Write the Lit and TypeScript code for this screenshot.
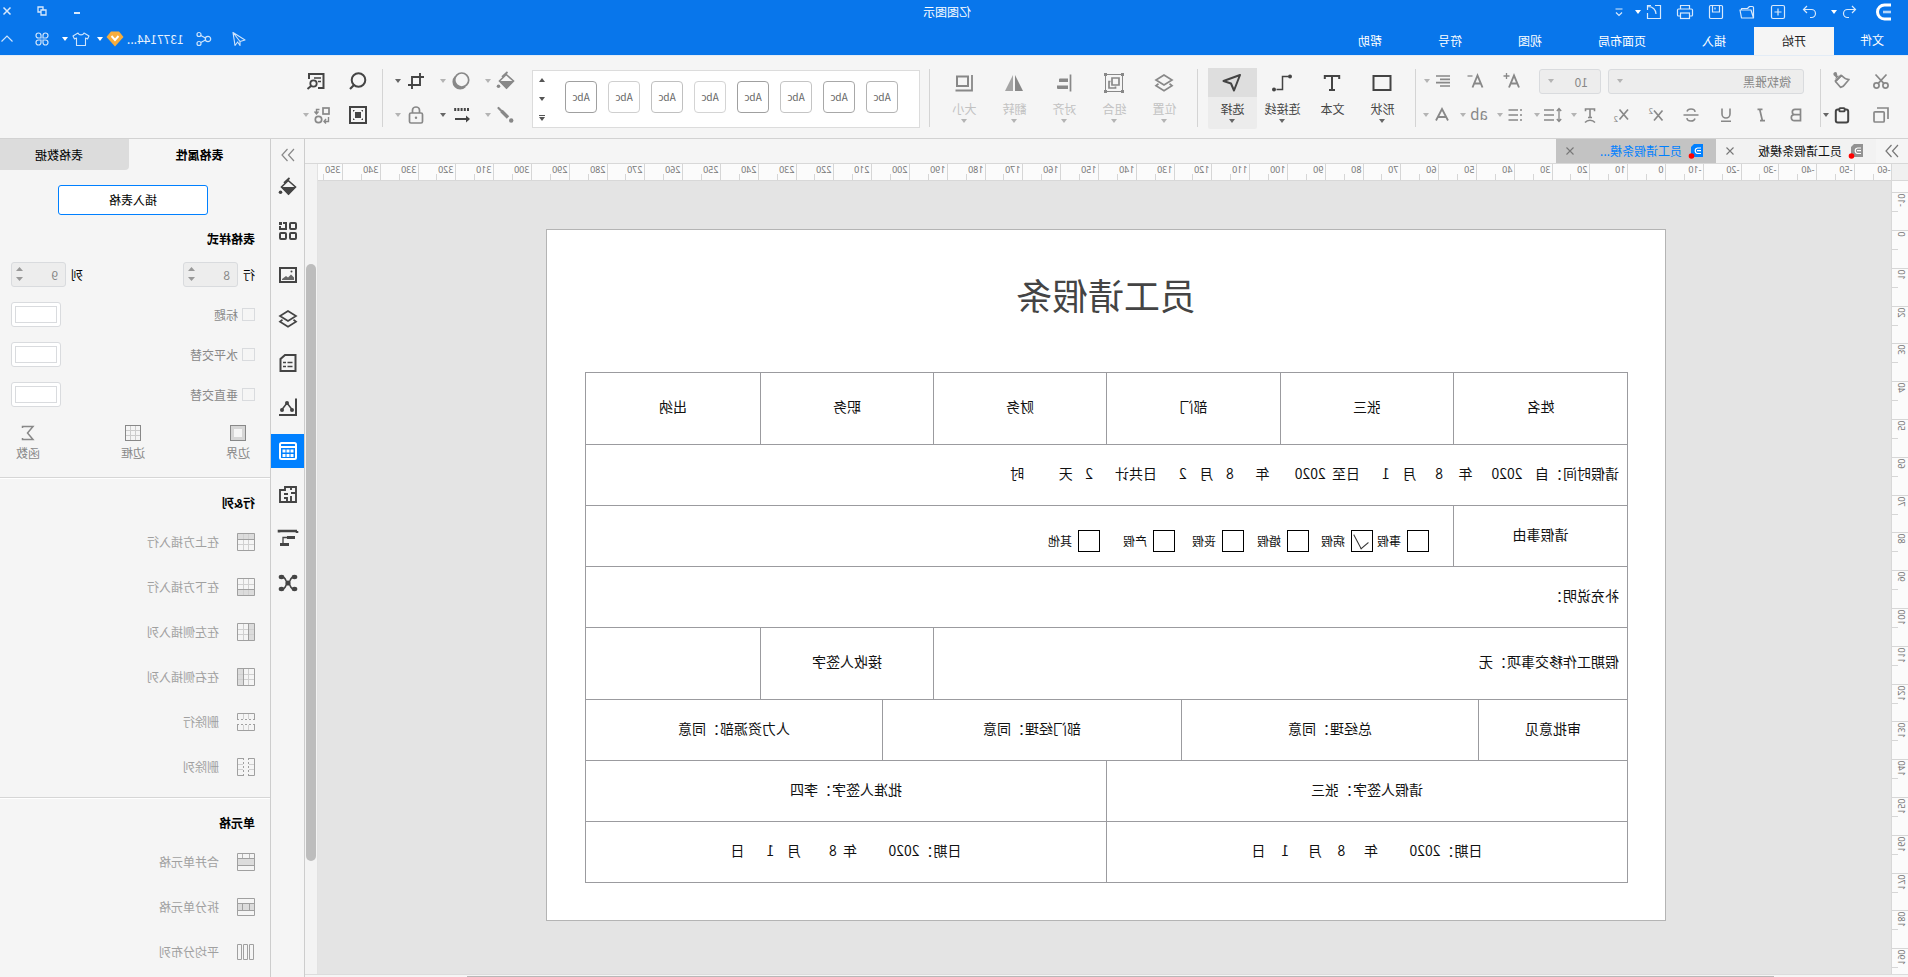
import { LitElement, html, svg, css, TemplateResult } from "lit";
import { customElement, property, state } from "lit/decorators.js";
import { classMap } from "lit/directives/class-map.js";

type Glyph = ReturnType<typeof svg>;

/* 20x20 toolbar glyphs, drawn with currentColor */
const glyphs: Record<string, Glyph> = {
  cut: svg`<g fill="none" stroke="currentColor" stroke-width="1.7"><circle cx="5.5" cy="14.5" r="2.6"/><circle cx="14.5" cy="14.5" r="2.6"/><path d="M4.5 3.5 13 12.6M15.5 3.5 7 12.6"/></g>`,
  format: svg`<path d="M15.3 1.6a2 2 0 0 1 3 2.6l-2.2 2 .6 2.4-4.2-4 2 .3z" fill="currentColor"/><path d="M10.5 4.5l6 6-5 5.800c-2-.4-3.700-1.600-4.700-3.300L3 8.500c2.600 0 5-1.300 7.500-4z" fill="none" stroke="currentColor" stroke-width="1.700" stroke-linejoin="round"/><path d="M9.500 4.500l7 7 1-2-6-6z" fill="currentColor"/>`,
  copy: svg`<g fill="none" stroke="currentColor" stroke-width="1.700"><rect x="6.800" y="6.800" width="10.200" height="10.200" rx="1"/><path d="M3 14V3H14"/></g>`,
  paste: svg`<g fill="none" stroke="currentColor" stroke-width="2"><rect x="3.800" y="4.500" width="12.400" height="13" rx="2"/></g><rect x="6.500" y="2.200" width="7" height="5" rx="1.500" fill="currentColor"/><rect x="8.300" y="4" width="3.400" height="1.500" fill="#f5f5f5"/>`,
  grow: svg`<path d="M3 16.500 8 4.500l5 12M4.800 12.500h6.400" fill="none" stroke="currentColor" stroke-width="1.900"/><path d="M12.500 5h6M15.500 2v6" stroke="currentColor" stroke-width="1.300"/>`,
  shrink: svg`<path d="M2.500 16.500 7.500 4.500l5 12M4.300 12.500h6.400" fill="none" stroke="currentColor" stroke-width="1.900"/><path d="M12.500 5h5" stroke="currentColor" stroke-width="1.300"/>`,
  align: svg`<path d="M3 5h14M3 8.300h10M3 11.600h14M3 15h10" stroke="currentColor" stroke-width="1.700"/>`,
  bold: svg`<path d="M5.500 4.300h5.500a2.700 2.700 0 0 1 0 5.400H5.500zM5.500 9.700h6.200a3 3 0 0 1 0 6H5.500z" fill="none" stroke="currentColor" stroke-width="1.700"/>`,
  italic: svg`<path d="M8.500 4.300h5M6 15.700h5M11.300 4.300 8.600 15.700" fill="none" stroke="currentColor" stroke-width="1.700"/>`,
  underline: svg`<path d="M6 3.500V9a4 4 0 0 0 8 0V3.500M5 16.300h10" fill="none" stroke="currentColor" stroke-width="1.600"/>`,
  strike: svg`<path d="M14 6.500C13.600 4.800 12 4 10 4 7.700 4 6 5.100 6 7M6 13.500c.4 1.700 2 2.500 4 2.500 2.300 0 4-1.100 4-3M2.500 10h15" fill="none" stroke="currentColor" stroke-width="1.500"/>`,
  sup: svg`<path d="M3.500 5.500l8.500 10M12 5.500l-8.500 10" stroke="currentColor" stroke-width="1.700"/><text x="13" y="9" font-size="8" fill="currentColor">2</text>`,
  sub: svg`<path d="M3 4.500l8.500 10M11.500 4.500 3 14.500" stroke="currentColor" stroke-width="1.700"/><text x="13" y="17" font-size="8" fill="currentColor">2</text>`,
  textShape: svg`<path d="M5.500 6.200V4h9v2.200M10 4v8.500M8 12.500h4" fill="none" stroke="currentColor" stroke-width="1.600"/><path d="M5 17.500a6.500 6.500 0 0 1 10 0" fill="none" stroke="currentColor" stroke-width="1.500"/>`,
  spacing: svg`<path d="M4 3.500v13M1.800 6 4 3.500 6.200 6M1.800 14 4 16.500 6.200 14" fill="none" stroke="currentColor" stroke-width="1.300"/><path d="M9 5h10M9 10h10M9 15h10" stroke="currentColor" stroke-width="1.700"/>`,
  list: svg`<path d="M8 5h9.500M8 10h9.500M8 15h9.500" stroke="currentColor" stroke-width="1.700"/><path d="M4 5h2M4 10h2M4 15h2" stroke="currentColor" stroke-width="1.700"/>`,
  highlight: svg`<text x="1" y="15" font-size="15" fill="currentColor">ab</text>`,
  fontColor: svg`<path d="M4 15.500 10 4l6 11.500M6 12h8" fill="none" stroke="currentColor" stroke-width="1.800"/>`,
  rect: svg`<rect x="1.500" y="3" width="17" height="14" fill="none" stroke="currentColor" stroke-width="2"/>`,
  text: svg`<path d="M2.800 6V3h14.400v3M10 3v14M7 17h6" fill="none" stroke="currentColor" stroke-width="2"/>`,
  connector: svg`<path d="M3.500 3.500h6v13h6" fill="none" stroke="currentColor" stroke-width="1.500"/><circle cx="2" cy="3.500" r="2" fill="currentColor"/><circle cx="18" cy="16.500" r="2" fill="currentColor"/>`,
  pointer: svg`<path d="M2 3 18.500 9 11 11.500 8 18.500z" fill="none" stroke="currentColor" stroke-width="2" stroke-linejoin="round" transform="translate(0 -1)"/>`,
  layers: svg`<g fill="none" stroke="currentColor" stroke-width="1.700"><path d="M10 2 18 7l-8 5-8-5z"/><path d="M4.500 10.800 2 12.600 10 17.800l8-5.200-2.500-1.800"/></g>`,
  group: svg`<g fill="none" stroke="currentColor"><rect x="1.500" y="1.500" width="17" height="17"/><path d="M5 5h7v7H5z M13.500 8.500H15V15H8.500v-1.500" stroke-width="1.700"/></g><path d="M0 0h3v3H0zM17 0h3v3h-3zM0 17h3v3H0zM17 17h3v3h-3z" fill="currentColor"/>`,
  alignObjects: svg`<path d="M3.500 1.500v17" stroke="currentColor" stroke-width="1.700"/><path d="M6 5.500h8a1 1 0 0 1 1 1V9H6zM6 12.500h11V15a1 1 0 0 1-1 1H6z" fill="currentColor"/>`,
  flip: svg`<path d="M9 2v16H1z" fill="currentColor"/><path d="M11 2v16h8z" fill="currentColor" opacity=".75"/>`,
  size: svg`<path d="M6 3.500h11v9.500h-11z" fill="none" stroke="currentColor" stroke-width="2"/><path d="M2 2v15.500h16.500" fill="none" stroke="currentColor" stroke-width="1.800"/>`,
  bucket: svg`<path d="M8.500 1l5.500 5" fill="none" stroke="currentColor" stroke-width="1.700"/><path d="M9.800 3.500 2.500 10l7 7 7-7z" fill="none" stroke="currentColor" stroke-width="1.600"/><path d="M2.500 10h14l-7 8z" fill="currentColor"/><circle cx="17.500" cy="15.200" r="1.800" fill="currentColor"/>`,
  pen: svg`<path d="M17.500 3 13 7.500" stroke="currentColor" stroke-width="2.200" stroke-linecap="round"/><path d="M14.500 6 8 12.500" stroke="currentColor" stroke-width="3.400"/><circle cx="4.800" cy="15.500" r="2.200" fill="currentColor"/>`,
  shadow: svg`<path d="M15.500 4.500a7.600 7.600 0 1 1-11 11z" fill="currentColor" transform="translate(.8 .8)"/><circle cx="9.300" cy="9" r="7" fill="#f5f5f5" stroke="currentColor" stroke-width="1.700"/>`,
  dashes: svg`<path d="M2 4.500h15" stroke="currentColor" stroke-width="3" stroke-dasharray="2 1.200"/><path d="M2 14h14" stroke="currentColor" stroke-width="2"/><path d="M5 10.500 1 14l4 3.500z" fill="currentColor"/>`,
  crop: svg`<path d="M6 2v12h12M2 6h12v12" fill="none" stroke="currentColor" stroke-width="1.900"/>`,
  lock: svg`<rect x="3.500" y="8" width="13" height="10" rx="1.500" fill="none" stroke="currentColor" stroke-width="1.700"/><path d="M6.500 8V5a3.500 3 0 0 1 7 0v3" fill="none" stroke="currentColor" stroke-width="1.700"/><circle cx="10" cy="12.800" r="1.200" fill="currentColor"/>`,
  search: svg`<circle cx="9.500" cy="9" r="6.800" fill="none" stroke="currentColor" stroke-width="2"/><path d="M13.500 13.500 18 18" stroke="currentColor" stroke-width="2.200"/>`,
  findDoc: svg`<path d="M8 17H2.500V3H17v5" fill="none" stroke="currentColor" stroke-width="2"/><path d="M5 7h7M5 10.500h3" stroke="currentColor" stroke-width="1.500"/><circle cx="12.500" cy="12.500" r="3.200" fill="none" stroke="currentColor" stroke-width="1.800"/><path d="M15 15l3.500 3" stroke="currentColor" stroke-width="2"/>`,
  fit: svg`<rect x="2" y="2" width="16" height="16" fill="none" stroke="currentColor" stroke-width="2"/><rect x="7" y="7" width="6" height="6" fill="currentColor"/><path d="M5 5h2l-2 2zM15 5v2l-2-2zM5 15v-2l2 2zM15 15h-2l2-2z" fill="currentColor"/>`,
  replace: svg`<rect x="3" y="3" width="6" height="6" fill="none" stroke="currentColor" stroke-width="1.700"/><circle cx="13.500" cy="14.500" r="3.200" fill="none" stroke="currentColor" stroke-width="1.700"/><path d="M12.500 4.500h3v4M13.500 6.500l2 2.500 2-2.500M3.500 12v4.500h4M6 14l2 2.500-2 2" fill="none" stroke="currentColor" stroke-width="1.400"/>`,
  /* side rail */
  shapes: svg`<g fill="none" stroke="currentColor" stroke-width="2"><rect x="2" y="2" width="6" height="6" rx="1"/><rect x="2" y="12" width="6" height="6" rx="1"/><rect x="12" y="12" width="6" height="6" rx="1"/><path d="M18 5V8h-6V2h3" /></g><path d="M16 1h3v3h-3z" fill="currentColor"/>`,
  image: svg`<rect x="2" y="3" width="16" height="14" fill="none" stroke="currentColor" stroke-width="2"/><path d="M4 15v-2.500l3-3 3 3 2-1.500 4 3v1z" fill="currentColor" opacity=".8"/><circle cx="6.500" cy="6.500" r="1" fill="currentColor"/>`,
  doc: svg`<path d="M2.500 2h10.500l4.500 4v12h-15z" fill="none" stroke="currentColor" stroke-width="2"/><path d="M5.500 9.500h5M12 9.500h3M5.500 13.500h5M12 13.500h3" stroke="currentColor" stroke-width="1.700"/>`,
  chart: svg`<path d="M2 1.500V18h17" fill="none" stroke="currentColor" stroke-width="2"/><path d="M6 12.500 11 6l5 6.500" fill="none" stroke="currentColor" stroke-width="1.500"/><circle cx="6" cy="13" r="2" fill="currentColor"/><circle cx="11" cy="6" r="2" fill="currentColor"/><circle cx="16" cy="13" r="2" fill="currentColor"/>`,
  table: svg`<rect x="2" y="2" width="16" height="16" rx="1.500" fill="none" stroke="currentColor" stroke-width="2"/><path d="M3 6h14" stroke="currentColor" stroke-width="2"/><path d="M4.500 10h11M4.500 14.500h11" stroke="currentColor" stroke-width="3" stroke-dasharray="3 1"/>`,
  plan: svg`<path d="M2 2h11v3h5v12H2zM2 8h5M7 2v3M7 11v6M11 17v-4h3M10 9h4" fill="none" stroke="currentColor" stroke-width="1.900"/>`,
  gantt: svg`<path d="M1 2h18v1.500M1 2V4" fill="none" stroke="currentColor" stroke-width="2.600"/><path d="M3 8.500h8M9 15.500h9" stroke="currentColor" stroke-width="3"/><path d="M11 8.500h4v6" fill="none" stroke="currentColor" stroke-width="1.300"/>`,
  mind: svg`<path d="M4 4c5 0 3 6 6 6s1-6 6-6M4 16c5 0 3-6 6-6s1 6 6 6" fill="none" stroke="currentColor" stroke-width="1.500"/><g fill="currentColor"><ellipse cx="3.500" cy="4" rx="2.800" ry="2.200"/><ellipse cx="16.500" cy="4" rx="2.800" ry="2.200"/><ellipse cx="3.500" cy="16" rx="2.800" ry="2.200"/><ellipse cx="16.500" cy="16" rx="2.800" ry="2.200"/><circle cx="10" cy="10" r="2.600"/></g>`,
  more: svg`<path d="M4 4l5.500 6L4 16M10.500 4l5.500 6-5.500 6" fill="none" stroke="currentColor" stroke-width="1.200"/>`,
  closeThin: svg`<path d="M6.500 6.500l7 7M13.500 6.500l-7 7" stroke="currentColor" stroke-width="1.100" />`,
  /* title bar */
  logo: svg`<path d="M3 3h6.500a7 7 0 0 1 0 14H3" fill="none" stroke="#fff" stroke-width="3"/><path d="M3 10h8" stroke="#fff" stroke-width="2.600" opacity=".7"/>`,
  undo: svg`<path d="M8 4 4.500 7.500 8 11M4.500 7.500h8a4 4 0 0 1 0 8H11" fill="none" stroke="currentColor" stroke-width="1.200"/>`,
  redo: svg`<path d="M12 4l3.500 3.500L12 11M15.500 7.500h-8a4 4 0 0 0 0 8H9" fill="none" stroke="currentColor" stroke-width="1.200"/>`,
  create: svg`<rect x="3.500" y="3.500" width="13" height="13" rx="1.500" fill="none" stroke="currentColor" stroke-width="1.200"/><path d="M10 6.500v7M6.500 10h7" stroke="currentColor" stroke-width="1.200"/>`,
  open: svg`<path d="M3.500 16V5.500a1 1 0 0 1 1-1h3l2 2h6V8M3.500 16h12l1.500-8H6z" fill="none" stroke="currentColor" stroke-width="1.200" stroke-linejoin="round"/>`,
  save: svg`<rect x="3.500" y="3.500" width="13" height="13" rx="1.200" fill="none" stroke="currentColor" stroke-width="1.200"/><path d="M6.500 3.500V10h7V3.500M11 5.500v2" fill="none" stroke="currentColor" stroke-width="1.200"/>`,
  print: svg`<g fill="none" stroke="currentColor" stroke-width="1.200"><path d="M5.500 7V3.500h9V7M5 14H3.500a1 1 0 0 1-1-1V8a1 1 0 0 1 1-1h13a1 1 0 0 1 1 1v5a1 1 0 0 1-1 1H15"/><rect x="5.500" y="11" width="9" height="5.500"/></g>`,
  exportFile: svg`<path d="M9 3.500H3.500v13h13V11" fill="none" stroke="currentColor" stroke-width="1.200"/><path d="M8 12c0-4 3-7.500 8-7.500M13 3.500h3.500V8" fill="none" stroke="currentColor" stroke-width="1.200"/>`,
  custom: svg`<path d="M6.500 7h7M7 10.500l3 3 3-3" fill="none" stroke="currentColor" stroke-width="1.200"/>`,
  min: svg`<path d="M7 12h6" stroke="currentColor" stroke-width="2"/>`,
  restore: svg`<path d="M11 9V6H6v5h3M14 9H9v5h5z" fill="none" stroke="currentColor" stroke-width="1.300" transform="matrix(-1 0 0 1 20 0)"/>`,
  close: svg`<path d="M6.500 6.500l7 7M13.500 6.500l-7 7" stroke="currentColor" stroke-width="1.500"/>`,
  send: svg`<path d="M16 3.500 4 11l5 1.500L16 3.500l-2 13-3-4M9 12.500v4l2-3" fill="none" stroke="currentColor" stroke-width="1.100" stroke-linejoin="round"/>`,
  share: svg`<g fill="none" stroke="currentColor" stroke-width="1.200"><circle cx="6" cy="10" r="2.700"/><circle cx="15" cy="5.500" r="2"/><circle cx="15" cy="14.500" r="2"/><path d="M8.500 9l4.700-2.500M8.500 11l4.700 2.500"/></g>`,
  vip: svg`<path d="M6 2.500h8L18.500 8 10 17.500 1.500 8z" fill="#f7ad3c"/><path d="M6.500 7l3.500 4 3.500-4" fill="none" stroke="#fff" stroke-width="1.900"/>`,
  shirt: svg`<path d="M7 4l-5 3 1.500 3L5.500 9v7.500h9V9l2 1L18 7l-5-3c-1 2.500-5 2.500-6 0z" fill="none" stroke="currentColor" stroke-width="1.100" stroke-linejoin="round"/>`,
  clover: svg`<g fill="none" stroke="currentColor" stroke-width="1.200"><path d="M9 9H6.500A2.500 2.500 0 1 1 9 6.500zM11 9V6.500A2.500 2.500 0 1 1 13.500 9zM9 11v2.500A2.500 2.500 0 1 1 6.500 11zM11 11h2.500A2.500 2.500 0 1 1 11 13.500z"/></g>`,
  up: svg`<path d="M4.500 12.500 10 7l5.500 5.500" fill="none" stroke="currentColor" stroke-width="1.200"/>`,
  /* table panel */
  outline: svg`<rect x="4.500" y="4.500" width="11" height="11" fill="none" stroke="#d6d6d6" stroke-width="3"/><rect x="2.500" y="2.500" width="15" height="15" fill="none" stroke="#888"/>`,
  grid: svg`<path d="M7.500 3v14M12.500 3v14M3 7.500h14M3 12.500h14" stroke="#ccc"/><rect x="2.500" y="2.500" width="15" height="15" fill="none" stroke="#888"/>`,
  sum: svg`<path d="M15.500 5V3.500H5l5.500 6.500L5 16.500h10.500V15" fill="none" stroke="currentColor" stroke-width="1.500"/>`,
  rowAbove: svg`<path d="M1 1h18v6H1z" fill="#dcdcdc"/><path d="M7.500 1v18M12.500 1v18M1 12.500h18" stroke="#d0d0d0"/><path d="M1.500 1.500h17v17h-17zM1 7.500h18" fill="none" stroke="#a0a0a0"/>`,
  rowBelow: svg`<path d="M1 13h18v6H1z" fill="#dcdcdc"/><path d="M7.500 1v18M12.500 1v18M1 7.500h18" stroke="#d0d0d0"/><path d="M1.500 1.500h17v17h-17zM1 12.500h18" fill="none" stroke="#a0a0a0"/>`,
  colLeft: svg`<path d="M1 1h6v18H1z" fill="#dcdcdc"/><path d="M12.500 1v18M1 7.500h18M1 12.500h18" stroke="#d0d0d0"/><path d="M1.500 1.500h17v17h-17zM7.500 1v18" fill="none" stroke="#a0a0a0"/>`,
  colRight: svg`<path d="M13 1h6v18h-6z" fill="#dcdcdc"/><path d="M7.500 1v18M1 7.500h18M1 12.500h18" stroke="#d0d0d0"/><path d="M1.500 1.500h17v17h-17zM12.500 1v18" fill="none" stroke="#a0a0a0"/>`,
  rowDelete: svg`<path d="M7.500 1v6M12.500 1v6M7.500 13v6M12.500 13v6" stroke="#d0d0d0"/><path d="M1.500 7V1.500h17V7M1.500 13v5.500h17V13" fill="none" stroke="#a0a0a0"/><path d="M1 7.500h18M1 12.500h18" stroke="#a0a0a0" stroke-dasharray="2 2"/>`,
  colDelete: svg`<path d="M1 7.500h6M1 12.500h6M13 7.500h6M13 12.500h6" stroke="#d0d0d0"/><path d="M7 1.500H1.500v17H7M13 1.500h5.500v17H13" fill="none" stroke="#a0a0a0"/><path d="M7.500 1v18M12.500 1v18" stroke="#a0a0a0" stroke-dasharray="2 2"/>`,
  merge: svg`<path d="M1 6h18v8H1z" fill="#dcdcdc"/><path d="M6.500 1v5M13.500 1v5" stroke="#b4b4b4"/><path d="M1.500 1.500h17v17h-17zM1 6.500h18M1 13.500h18" fill="none" stroke="#a0a0a0"/>`,
  split: svg`<path d="M1 6h18v8H1z" fill="#dcdcdc"/><path d="M6.500 6v8M13.500 6v8" stroke="#a0a0a0"/><path d="M1.500 1.500h17v17h-17zM1 6.500h18M1 13.500h18" fill="none" stroke="#a0a0a0"/>`,
  spread: svg`<path d="M2.500 2.500h4v15h-4zM8.500 2.500h4v15h-4zM14.500 2.500h4v15h-4z" fill="none" stroke="#a0a0a0"/>`,
};

const icon = (name: string) =>
  html`<svg class="icon" viewBox="0 0 20 20" aria-hidden="true">${glyphs[name]}</svg>`;

const caret = (dark = false) =>
  html`<svg class=${classMap({ caret: true, dark })} viewBox="0 0 6 4" aria-hidden="true"><path d="M0 0h6L3 4z" fill="currentColor" /></svg>`;

interface Tool {
  icon: string;
  name: string;
  menu?: boolean;
  on?: boolean;
}

const tool = (t: Tool): TemplateResult =>
  html`<button class=${classMap({ tool: true, on: !!t.on })} title=${t.name} aria-label=${t.name}>
    ${icon(t.icon)}${t.menu ? caret(t.on) : ""}
  </button>`;

const shared = css`
  :host, * { box-sizing: border-box; }
  button, input, select { font: inherit; color: inherit; margin: 0; padding: 0; border: 0; background: none; }
  .icon { width: 20px; height: 20px; flex: none; display: block; overflow: visible; }
  .caret { width: 6px; height: 4px; flex: none; display: block; color: #b4b4b4; }
  .caret.dark { color: #666; }
`;

/* ---------- title bar and menu ---------- */
@customElement("app-header")
class AppHeader extends LitElement {
  static styles = [shared, css`
    :host { display: block; background: #0876eb; color: #fff; }
    .title { display: grid; grid-template-columns: 1fr auto 1fr; align-items: center; height: 24px; padding: 0 0 0 14px; color: #d8e9fc; }
    .title .tool { display: flex; align-items: center; gap: 3px; height: 24px; }
    .quick { display: flex; align-items: center; gap: 11px; }
    .quick .logo { margin-right: 3px; }
    .quick .split { margin-right: 1px; }
    .quick .split.last { margin-right: -5px; }
    .name { color: #fff; line-height: 20px; }
    .window { display: flex; justify-content: flex-end; gap: 15px; margin-right: -3px; margin-top: -3px; }
    .caret, .caret.dark { color: #fff; }
    .menu { display: flex; height: 31px; }
    .tabs { display: flex; padding-top: 3px; }
    .tab { padding: 0 28px; height: 28px; line-height: 28px; color: #fff; text-decoration: none; }
    .tab.file { padding: 0 26px 0 24px; line-height: 26px; }
    .tab.active { background: #f5f5f5; color: #222; }
    .account { display: flex; align-items: center; margin-left: auto; gap: 15px; height: 30px; color: #cfe4fb; margin-right: -3px; }
    .account button { display: flex; align-items: center; gap: 3px; height: 24px; }
    .account .user { color: #e8f2fd; gap: 2px; margin-left: -5px; }
    .account .theme { margin-left: -9px; }
    .account .apps { margin-left: -5px; }
  `];
  render() {
    const quick: Tool[] = [
      { icon: "redo", name: "重做" }, { icon: "create", name: "新建" }, { icon: "open", name: "打开" },
      { icon: "save", name: "保存" }, { icon: "print", name: "打印" },
    ];
    const tabs = ["开始", "插入", "页面布局", "视图", "符号", "帮助"];
    return html`
      <div class="title">
        <div class="quick">
          <span class="logo">${icon("logo")}</span>
          <span class="split">${tool({ icon: "undo", name: "撤销", menu: true })}</span>
          ${quick.map(tool)}
          <span class="split last">${tool({ icon: "exportFile", name: "导出", menu: true })}</span>
          ${tool({ icon: "custom", name: "自定义" })}
        </div>
        <span class="name">亿图图示</span>
        <div class="window">
          ${tool({ icon: "min", name: "最小化" })}${tool({ icon: "restore", name: "还原" })}${tool({ icon: "close", name: "关闭" })}
        </div>
      </div>
      <div class="menu">
        <nav class="tabs">
          <a class="tab file" href="#">文件</a>
          ${tabs.map((t, i) => html`<a class=${classMap({ tab: true, active: i === 0 })} href="#">${t}</a>`)}
        </nav>
        <div class="account">
          <button aria-label="发送">${icon("send")}</button>
          <button aria-label="分享">${icon("share")}</button>
          <button class="user">1377144...${icon("vip")}${caret()}</button>
          <button class="theme" aria-label="皮肤">${icon("shirt")}${caret()}</button>
          <button class="apps" aria-label="应用">${icon("clover")}</button>
          <button aria-label="收起">${icon("up")}</button>
        </div>
      </div>`;
  }
}

/* ---------- ribbon ---------- */
@customElement("app-ribbon")
class AppRibbon extends LitElement {
  static styles = [shared, css`
    :host { display: flex; height: 84px; padding-top: 13px; background: #f5f5f5; border-top: 1px solid #e3ecf6; border-bottom: 1px solid #d2d2d2; color: #888; }
    .group { display: flex; flex-direction: column; gap: 10px; height: 58px; border-right: 1px solid #d4d4d4; }
    .line { display: flex; align-items: center; height: 24px; }
    .tool { display: flex; align-items: center; gap: 3px; height: 24px; }
    .tool.on { color: #444; }
    .clip { padding: 0 4px 0 17px; width: 88px; }
    .clip .line { gap: 19px; }
    .font { width: 405px; }
    .font .fields { padding-left: 16px; gap: 7px; }
    .font .fields .tool { margin-left: 10px; }
    .font .fields .tool:last-child { margin-left: 5px; }
    .font .marks { padding-left: 14px; gap: 15px; }
    .font .menus { display: flex; gap: 8px; margin-left: -4px; }
    .select { position: relative; display: block; }
    .select select { appearance: none; display: block; width: 100%; height: 25px; padding: 0 12px; background: #ededed; border: 1px solid #d9dbde; border-radius: 3px; line-height: 23px; }
    .select .caret { position: absolute; right: 9px; top: 10px; }
    .family { width: 196px; }
    .size { width: 62px; }
    .big { flex-direction: row; gap: 1px; padding: 0 10px 0 8px; }
    .cmd { width: 49px; height: 61px; margin-top: -1px; border-radius: 2px; display: flex; flex-direction: column; align-items: center; color: #888; }
    .cmd .face { width: 49px; height: 29px; display: flex; align-items: center; justify-content: center; }
    .cmd .label { line-height: 20px; margin-top: 2px; color: #c2c2c2; white-space: nowrap; }
    .cmd.on, .cmd.on .label { color: #444; }
    .cmd.selected { background: #ececec; }
    .cmd.selected .face { background: #dedede; }
    .gallery { display: flex; height: 58px; width: 388px; margin-left: 9px; background: #fff; border: 1px solid #dcdcdc; padding: 10px 0 0 21px; margin-top: 1px; position: relative; gap: 11px; }
    .style { width: 32px; height: 32px; border: 1px solid; border-radius: 4px; font-size: 10px; line-height: 30px; text-align: center; }
    .style span { color: #666; }
    .scroll { position: absolute; right: 3px; top: 0; width: 12px; height: 56px; display: flex; flex-direction: column; justify-content: space-around; align-items: center; }
    .scroll svg { width: 6px; height: 6px; color: #555; display: block; }
    .effects { padding: 0 12px 0 16px; }
    .effects .tool { gap: 5px; }
    .effects .line { gap: 14px; }
    .find { border: 0; padding-left: 14px; }
    .find .line { gap: 22px; }
    .find .line + .line { gap: 16px; }
  `];
  render() {
    const marks: Tool[] = [
      { icon: "bold", name: "加粗" }, { icon: "italic", name: "倾斜" }, { icon: "underline", name: "下划线" },
      { icon: "strike", name: "删除线" }, { icon: "sup", name: "上标" }, { icon: "sub", name: "下标" },
    ];
    const menus: Tool[] = [
      { icon: "textShape", name: "文字方向", menu: true }, { icon: "spacing", name: "行距", menu: true },
      { icon: "list", name: "项目符号", menu: true }, { icon: "highlight", name: "突出显示", menu: true },
      { icon: "fontColor", name: "字体颜色", menu: true },
    ];
    const cmd = (t: Tool, selected = false) => html`
      <button class=${classMap({ cmd: true, on: !!t.on, selected })}>
        <span class="face">${icon(t.icon)}</span><span class="label">${t.name}</span>${t.menu ? caret(t.on) : ""}
      </button>`;
    const styles = ["#b4b4b4", "#a8a8a8", "#c4c4c4", "#a0a0a0", "#d4d4d4", "#c0c0c0", "#cfcfcf", "#a0a0a0"];
    return html`
      <div class="group clip">
        <div class="line">${tool({ icon: "cut", name: "剪切" })}${tool({ icon: "format", name: "格式刷" })}</div>
        <div class="line">${tool({ icon: "copy", name: "复制" })}${tool({ icon: "paste", name: "粘贴", menu: true, on: true })}</div>
      </div>
      <div class="group font">
        <div class="line fields">
          <label class="select family"><select aria-label="字体"><option>微软雅黑</option></select>${caret()}</label>
          <label class="select size"><select aria-label="字号"><option>10</option></select>${caret()}</label>
          ${tool({ icon: "grow", name: "增大字号" })}${tool({ icon: "shrink", name: "减小字号" })}
          ${tool({ icon: "align", name: "对齐", menu: true })}
        </div>
        <div class="line marks">${marks.map(tool)}<div class="menus">${menus.map(tool)}</div></div>
      </div>
      <div class="group big">
        ${cmd({ icon: "rect", name: "形状", menu: true, on: true })}
        ${cmd({ icon: "text", name: "文本", on: true })}
        ${cmd({ icon: "connector", name: "连接线", menu: true, on: true })}
        ${cmd({ icon: "pointer", name: "选择", menu: true, on: true }, true)}
      </div>
      <div class="group big">
        ${[["layers", "位置"], ["group", "组合"], ["alignObjects", "对齐"], ["flip", "翻转"], ["size", "大小"]]
          .map(([i, n]) => cmd({ icon: i, name: n, menu: true }))}
      </div>
      <div class="gallery">
        ${styles.map((c) => html`<button class="style" style="border-color:${c}"><span>Abc</span></button>`)}
        <div class="scroll">
          <svg viewBox="0 0 6 6"><path d="M0 5h6L3 1z" fill="currentColor" /></svg>
          <svg viewBox="0 0 6 6"><path d="M0 1h6L3 5z" fill="currentColor" /></svg>
          <svg viewBox="0 0 6 6"><path d="M0 0h6v1H0zM0 2h6L3 6z" fill="currentColor" /></svg>
        </div>
      </div>
      <div class="group effects">
        <div class="line">
          ${tool({ icon: "bucket", name: "填充", menu: true })}${tool({ icon: "shadow", name: "阴影", menu: true })}
          ${tool({ icon: "crop", name: "裁剪", menu: true, on: true })}
        </div>
        <div class="line">
          ${tool({ icon: "pen", name: "线条", menu: true })}${tool({ icon: "dashes", name: "线型", menu: true, on: true })}
          ${tool({ icon: "lock", name: "保护", menu: true })}
        </div>
      </div>
      <div class="group find">
        <div class="line">${tool({ icon: "search", name: "查找", on: true })}${tool({ icon: "findDoc", name: "查找替换", on: true })}</div>
        <div class="line">${tool({ icon: "fit", name: "适应窗口", on: true })}${tool({ icon: "replace", name: "替换形状", menu: true })}</div>
      </div>`;
  }
}

/* ---------- rulers ---------- */
@customElement("app-ruler")
class AppRuler extends LitElement {
  @property({ type: Boolean, reflect: true }) vertical = false;
  @property({ type: Number }) zero = 0;
  @state() private extent = 0;
  private observer = new ResizeObserver(() => this.measure());
  static styles = css`
    :host { box-sizing: border-box; display: block; overflow: hidden; background: #fbfbfb; min-width: 0; min-height: 0; }
    svg { display: block; width: 100%; height: 100%; font: 9px "Noto Sans", "Noto Sans CJK SC", sans-serif; fill: #777; }
    .tick { stroke: #d6d6d6; }
  `;
  connectedCallback() {
    super.connectedCallback();
    this.observer.observe(this);
  }
  disconnectedCallback() {
    this.observer.disconnect();
    super.disconnectedCallback();
  }
  private measure() {
    this.extent = this.vertical ? this.clientHeight : this.clientWidth;
  }
  render() {
    const marks: Glyph[] = [];
    const first = this.vertical ? -10 : -60;
    for (let v = first; ; v += 5) {
      const p = this.zero + Math.round((v * 378) / 100) + 0.5;
      if (p > this.extent) break;
      const major = v % 10 === 0;
      const from = major ? 0 : 10;
      const fits = major && p + 18 < this.extent;
      if (this.vertical) {
        marks.push(svg`<line class="tick" x1=${from} x2="17" y1=${p} y2=${p} />`);
        if (fits) marks.push(svg`<text text-anchor="end" transform="translate(10 ${p + 1}) rotate(-90)">${v}</text>`);
      } else {
        marks.push(svg`<line class="tick" y1=${from} y2="17" x1=${p} x2=${p} />`);
        if (fits) marks.push(svg`<text x=${p + 2} y="9">${v}</text>`);
      }
    }
    return html`<svg aria-hidden="true">${marks}</svg>`;
  }
}

/* ---------- leave request form ---------- */
@customElement("leave-form")
class LeaveForm extends LitElement {
  static styles = css`
    :host, * { box-sizing: border-box; }
    :host { display: block; width: 1120px; height: 692px; flex: none; background: #fff; border: 1px solid #b4b4b4; padding: 33px 37px 0; }
    h1 { margin: 0 0 46px; font-size: 36px; line-height: 63px; font-weight: 400; text-align: center; color: #444; }
    table { width: 1043px; table-layout: fixed; border-collapse: collapse; font-size: 14px; color: #111; }
    td { border: 1px solid #9b9b9f; padding: 0 8px 5px; height: 61px; text-align: center; line-height: 20px; white-space: pre; }
    .tall td { height: 72px; }
    .left { text-align: left; }
    .reasons { display: flex; align-items: center; padding: 14px 0 0 16px; font-size: 12px; }
    .reason { display: flex; align-items: center; gap: 6px; }
    .reason input { appearance: none; width: 22px; height: 22px; margin: 0; border: 1px solid #000; border-radius: 0; display: grid; }
    .reason input:checked::after { content: ""; width: 9px; height: 15px; margin: 0 0 0 6px; border: solid #333; border-width: 0 1px 1px 0; transform: rotate(40deg) skewX(12deg); }
  `;
  render() {
    const cols = [149, 25, 173, 99, 75, 173, 51, 122, 175];
    const reasons: [string, number, boolean][] = [
      ["事假", 0, false], ["病假", 4, true], ["婚假", 12, false], ["丧假", 13, false], ["产假", 17, false], ["其他", 23, false],
    ];
    const gap = (n: number) => "\u00a0".repeat(n);
    const span = `请假时间：自${gap(4)}2020${gap(6)}年${gap(5)}8${gap(6)}月${gap(4)}1${gap(7)}日至${gap(2)}2020${gap(8)}年${gap(7)}8${gap(4)}月${gap(4)}2${gap(7)}日共计${gap(7)}2${gap(4)}天${gap(11)}时`;
    return html`
      <h1>员工请假条</h1>
      <table>
        <colgroup>${cols.map((w) => html`<col style="width:${w}px" />`)}</colgroup>
        <tbody>
          <tr class="tall"><td colspan="2">姓名</td><td>张三</td><td colspan="2">部门</td><td>财务</td><td colspan="2">职务</td><td>出纳</td></tr>
          <tr><td class="left" colspan="9">${span}</td></tr>
          <tr>
            <td colspan="2">请假事由</td>
            <td colspan="7"><div class="reasons">${reasons.map(([name, before, checked]) => html`<label class="reason" style="margin-left:${before}px"><input type="checkbox" .checked=${checked} />${name}</label>`)}</div></td>
          </tr>
          <tr><td class="left" colspan="9">补充说明：</td></tr>
          <tr class="tall"><td class="left" colspan="6">假期工作移交事项：无</td><td colspan="2">接收人签字</td><td></td></tr>
          <tr><td>审批意见</td><td colspan="3">总经理：同意</td><td colspan="3">部门经理：同意</td><td colspan="2">人力资源部：同意</td></tr>
          <tr><td colspan="5">请假人签字：张三</td><td colspan="4">批准人签字：李四</td></tr>
          <tr>
            <td colspan="5">${`日期：2020${gap(10)}年${gap(6)}8${gap(5)}月${gap(6)}1${gap(5)}日`}</td>
            <td colspan="4">${`日期：2020${gap(10)}年${gap(2)}8${gap(9)}月${gap(4)}1${gap(7)}日`}</td>
          </tr>
        </tbody>
      </table>`;
  }
}

/* ---------- document area ---------- */
@customElement("app-workspace")
class AppWorkspace extends LitElement {
  static styles = [shared, css`
    :host { display: flex; flex-direction: column; flex: 1; min-width: 0; background: #f5f5f5; }
    .docs { display: flex; height: 25px; border-bottom: 1px solid #d8d8d8; }
    .expand { width: 32px; display: grid; place-items: center; color: #777; }
    .doc { display: flex; align-items: center; width: 160px; padding: 0 4px 0 12px; background: #f2f2f2; color: #111; white-space: nowrap; }
    .doc.current { background: #c3c3c3; color: #0080ff; }
    .badge { width: 18px; height: 16px; margin-right: 4px; flex: none; color: #929292; }
    .current .badge { color: #0080ff; }
    .doc button { margin-left: auto; color: #777; }
    .view { flex: 1; min-height: 0; display: grid; grid-template: 17px 1fr / 17px 1fr 13px; }
    .corner { background: #f0f0f0; border-right: 1px solid #d8d8d8; border-bottom: 1px solid #d8d8d8; }
    .across { border-bottom: 1px solid #d8d8d8; }
    .down { border-right: 1px solid #d8d8d8; }
    .canvas { overflow: hidden; background: #e4e4e4; padding: 48px 0 0 225px; }
    .track { grid-row: 1 / 3; grid-column: 3; background: #f3f3f3; border-left: 1px solid #e2e2e2; padding: 100px 1px 113px; display: flex; }
    .thumb { flex: 1; border-radius: 5px; background: #bdbdbd; }
    .hscroll { height: 3px; border-top: 1px solid #dcdcdc; padding: 1px 162px 0 134px; }
    .hthumb { height: 1px; background: #b8b8b8; }
  `];
  render() {
    const doc = (name: string, current: boolean) => html`
      <div class=${classMap({ doc: true, current })}>
        <svg class="badge" viewBox="0 0 18 16" aria-hidden="true">
          <path d="M1 1h9l3 3v10H1z" fill="currentColor" />
          <path d="M3 5h3.500a2.800 2.800 0 0 1 0 5.500H3M3 7.700h4" fill="none" stroke="#fff" stroke-width="1.200" />
          <circle cx="12.500" cy="13" r="2.800" fill="#f00" />
        </svg>
        <span>${name}</span>
        <button aria-label="关闭">${icon("closeThin")}</button>
      </div>`;
    return html`
      <div class="docs">
        <button class="expand" aria-label="展开">${icon("more")}</button>
        ${doc("员工请假条模板", false)}${doc("员工请假条模...", true)}
      </div>
      <div class="view">
        <div class="corner"></div>
        <app-ruler class="across" .zero=${225}></app-ruler>
        <div class="track"><div class="thumb"></div></div>
        <app-ruler class="down" vertical .zero=${49}></app-ruler>
        <div class="canvas"><leave-form></leave-form></div>
      </div>
      <div class="hscroll"><div class="hthumb"></div></div>`;
  }
}

/* ---------- table panel ---------- */
@customElement("app-panel")
class AppPanel extends LitElement {
  static styles = [shared, css`
    :host { display: flex; flex: none; background: #f5f5f5; color: #888; min-height: 0; overflow: hidden; }
    .rail { width: 35px; border: solid #cdcdcd; border-width: 0 1px; display: flex; flex-direction: column; color: #444; }
    .rail button { height: 34px; margin-bottom: 10px; padding-right: 2px; display: grid; place-items: center; flex: none; }
    .rail .fold { height: 31px; margin-bottom: 0; color: #888; }
    .rail .active { background: #0080ff; color: #fff; }
    .body { width: 270px; overflow: hidden; }
    .tabs { display: flex; height: 31px; color: #000; }
    .tabs button { flex: 1; line-height: 31px; text-align: center; }
    .tabs .active { flex: 0 0 141px; font-weight: 700; }
    .tabs .idle { background: #dcdcdc; border-bottom-left-radius: 4px; padding-left: 11px; }
    section { padding: 0 11px 0 15px; border-bottom: 1px solid #d6d6d6; }
    section + section { border-top: 1px solid #fff; padding-top: 14px; }
    h2 { margin: 0; font-size: 12px; line-height: 20px; color: #000; font-weight: 700; }
    .insert { display: block; width: 150px; height: 30px; margin: 15px auto 14px 47px; border: 1px solid #0080ff; border-radius: 3px; background: #fff; color: #000; }
    .counts { display: flex; align-items: center; justify-content: space-between; margin-top: 13px; height: 25px; }
    .counts label { display: flex; align-items: center; gap: 5px; color: #000; }
    .spin { position: relative; display: block; color: #888; }
    .spin input { appearance: textfield; display: block; width: 55px; height: 25px; padding: 0 7px; background: #ededed; border: 1px solid #d9dbde; border-radius: 3px; }
    .spin input::-webkit-inner-spin-button { appearance: none; margin: 0; }
    .spin svg { position: absolute; right: 5px; top: 4px; width: 7px; height: 16px; color: #999; }
    .option { display: flex; align-items: center; justify-content: space-between; height: 25px; margin-top: 15px; }
    .option label { display: flex; align-items: center; gap: 4px; }
    .option input { appearance: none; width: 13px; height: 13px; border: 1px solid #d9dbde; }
    .swatch { width: 50px; height: 25px; padding: 3px; border: 1px solid #d9dbde; border-radius: 3px; background: #fff; display: flex; }
    .swatch span { flex: 1; border: 1px solid #d9dbde; }
    .kinds { display: flex; justify-content: space-between; padding: 0 5px; margin-top: 15px; height: 55px; }
    .kinds button { display: flex; flex-direction: column; align-items: center; gap: 3px; height: 38px; line-height: 14px; }
    .kinds .icon { margin-top: 1px; }
    .items { margin: 19px 0 0; padding: 0 0 20px; list-style: none; display: flex; flex-direction: column; gap: 25px; }
    .items button { display: flex; align-items: center; gap: 17px; height: 20px; color: #a0a0a0; margin-left: -1px; }
  `];
  render() {
    const rail = ["bucket", "shapes", "image", "layers", "doc", "chart", "table", "plan", "gantt", "mind"];
    const list = (items: string[][]) => html`<ul class="items">${items.map(([i, n]) => html`<li><button>${icon(i)}${n}</button></li>`)}</ul>`;
    const spin = (name: string, value: number) => html`
      <label>${name}<span class="spin"><input type="number" .value=${String(value)} />
        <svg viewBox="0 0 7 16" aria-hidden="true"><path d="M0 5h7L3.500 1zM0 11h7l-3.500 4z" fill="currentColor" /></svg></span></label>`;
    return html`
      <div class="rail">
        <button class="fold" aria-label="折叠">${icon("more")}</button>
        ${rail.map((r) => html`<button class=${classMap({ active: r === "table" })} aria-label=${r}>${icon(r)}</button>`)}
      </div>
      <div class="body">
        <div class="tabs"><button class="active">表格属性</button><button class="idle">表格数据</button></div>
        <section>
          <button class="insert">插入表格</button>
          <h2>表格样式</h2>
          <div class="counts">${spin("行", 8)}${spin("列", 9)}</div>
          ${["标题", "水平交替", "垂直交替"].map((n) => html`
            <div class="option"><label><input type="checkbox" />${n}</label><button class="swatch" aria-label="${n}颜色"><span></span></button></div>`)}
          <div class="kinds">
            <button>${icon("outline")}边界</button><button>${icon("grid")}边框</button><button>${icon("sum")}函数</button>
          </div>
        </section>
        <section>
          <h2>行&amp;列</h2>
          ${list([["rowAbove", "在上方插入行"], ["rowBelow", "在下方插入行"], ["colLeft", "在左侧插入列"], ["colRight", "在右侧插入列"], ["rowDelete", "删除行"], ["colDelete", "删除列"]])}
        </section>
        <section>
          <h2>单元格</h2>
          ${list([["merge", "合并单元格"], ["split", "拆分单元格"], ["spread", "平均分布列"]])}
        </section>
      </div>`;
  }
}

@customElement("app-root")
class AppRoot extends LitElement {
  static styles = css`
    :host { display: flex; flex-direction: column; height: 100vh; overflow: hidden; transform: scaleX(-1); background: #f5f5f5; font: 12px/20px "Noto Sans CJK SC", "Noto Sans", sans-serif; }
    .main { display: flex; flex: 1; min-height: 0; }
  `;
  render() {
    return html`
      <app-header></app-header>
      <app-ribbon></app-ribbon>
      <div class="main"><app-workspace></app-workspace><app-panel></app-panel></div>`;
  }
}
